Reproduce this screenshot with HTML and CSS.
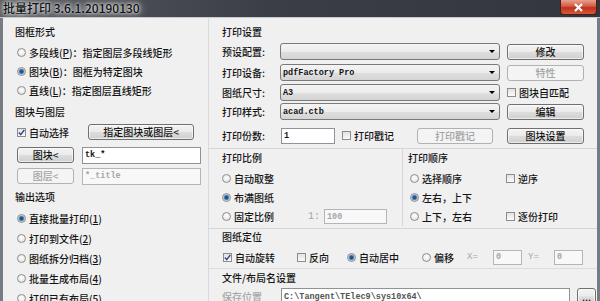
FILE: index.html
```html
<!DOCTYPE html>
<html lang="zh-CN">
<head>
    <meta charset="UTF-8">
    <title>批量打印</title>
    <link rel="stylesheet" href="styles.css">
</head>
<body>
<div class="window">

    <!-- Title bar -->
    <div class="titlebar">
        <span class="title">批量打印 3.6.1.20190130</span>
        <span class="close-btn">
            <svg width="11" height="9" viewBox="0 0 11 9"><path d="M2 1 L9 8 M9 1 L2 8" stroke="#fff" stroke-width="2.2" fill="none"/></svg>
        </span>
    </div>

    <div class="client">

        <!-- Left column -->
        <div class="col-left">
            <div class="group-title">图框形式</div>
            <div class="opt-list">
                <div class="opt"><span class="radio"></span>多段线(<u>P</u>)：指定图层多段线矩形</div>
                <div class="opt"><span class="radio checked"></span>图块(<u>B</u>)：图框为特定图块</div>
                <div class="opt"><span class="radio"></span>直线(<u>L</u>)：指定图层直线矩形</div>
            </div>

            <div class="group-title title-layer">图块与图层</div>
            <div class="row row-auto">
                <div class="opt chk-auto">
                    <span class="check"><svg width="7" height="7" viewBox="0 0 7 7"><path d="M0.8 3.6 L2.7 5.6 L6.3 1" fill="none" stroke="#34498a" stroke-width="1.4"/></svg></span>自动选择
                </div>
                <button class="btn btn-pick">指定图块或图层&lt;</button>
            </div>
            <div class="row row-block">
                <button class="btn btn-small">图块&lt;</button>
                <div class="field field-block">tk_*</div>
            </div>
            <div class="row row-layer">
                <button class="btn btn-small" disabled>图层&lt;</button>
                <div class="field field-block disabled">*_title</div>
            </div>

            <div class="group-title title-out">输出选项</div>
            <div class="opt-list out-list">
                <div class="opt"><span class="radio checked"></span>直接批量打印(<u>1</u>)</div>
                <div class="opt"><span class="radio"></span>打印到文件(<u>2</u>)</div>
                <div class="opt"><span class="radio"></span>图纸拆分归档(<u>3</u>)</div>
                <div class="opt"><span class="radio"></span>批量生成布局(<u>4</u>)</div>
                <div class="opt"><span class="radio"></span>打印已有布局(<u>5</u>)</div>
            </div>
        </div>

        <!-- Right column -->
        <div class="col-right">
            <div class="group-title">打印设置</div>
            <div class="row r1">
                <span class="lbl">预设配置:</span>
                <div class="combo"></div>
                <button class="btn btn-side">修改</button>
            </div>
            <div class="row r2">
                <span class="lbl">打印设备:</span>
                <div class="combo">pdfFactory Pro</div>
                <button class="btn btn-side" disabled>特性</button>
            </div>
            <div class="row r3">
                <span class="lbl">图纸尺寸:</span>
                <div class="combo">A3</div>
                <div class="opt chk-side"><span class="check"></span>图块自匹配</div>
            </div>
            <div class="row r4">
                <span class="lbl">打印样式:</span>
                <div class="combo">acad.ctb</div>
                <button class="btn btn-side">编辑</button>
            </div>
            <div class="row r5">
                <span class="lbl">打印份数:</span>
                <div class="field field-copies">1</div>
                <div class="opt chk-stamp"><span class="check"></span>打印戳记</div>
                <button class="btn btn-stamp" disabled>打印戳记</button>
                <button class="btn btn-side">图块设置</button>
            </div>

            <div class="split">
                <div class="box-scale">
                    <div class="group-title">打印比例</div>
                    <div class="opt-list">
                        <div class="opt"><span class="radio"></span>自动取整</div>
                        <div class="opt"><span class="radio checked"></span>布满图纸</div>
                        <div class="opt"><span class="radio"></span>固定比例<span class="ratio">1:</span><div class="field field-ratio disabled">100</div></div>
                    </div>
                </div>
                <div class="box-order">
                    <div class="group-title">打印顺序</div>
                    <div class="order-grid">
                        <div class="opt"><span class="radio"></span>选择顺序</div>
                        <div class="opt"><span class="check"></span>逆序</div>
                        <div class="opt"><span class="radio checked"></span>左右，上下</div>
                        <div></div>
                        <div class="opt"><span class="radio"></span>上下，左右</div>
                        <div class="opt"><span class="check"></span>逐份打印</div>
                    </div>
                </div>
            </div>

            <div class="group-title title-pos">图纸定位</div>
            <div class="row r-pos">
                <div class="opt w-rot">
                    <span class="check"><svg width="7" height="7" viewBox="0 0 7 7"><path d="M0.8 3.6 L2.7 5.6 L6.3 1" fill="none" stroke="#34498a" stroke-width="1.4"/></svg></span>自动旋转
                </div>
                <div class="opt w-rev"><span class="check"></span>反向</div>
                <div class="opt w-center"><span class="radio checked"></span>自动居中</div>
                <div class="opt w-off"><span class="radio"></span>偏移</div>
                <span class="xy">X=</span>
                <div class="field field-off disabled">0</div>
                <span class="xy xy-y">Y=</span>
                <div class="field field-off disabled">0</div>
            </div>

            <div class="group-title title-file">文件/布局名设置</div>
            <div class="row r-path">
                <span class="lbl disabled">保存位置</span>
                <div class="field field-path">C:\Tangent\TElec9\sys10x64\</div>
                <button class="btn btn-browse">...</button>
            </div>
        </div>
    </div>
</div>
</body>
</html>
```

FILE: styles.css
```css
* {
    box-sizing: border-box;
}

body {
    margin: 0;
    background-color: #f0f0f0;
    font-family: "Noto Sans CJK SC", "Noto Sans", sans-serif;
    font-size: 10px;
    font-weight: 500;
    color: #141414;
}

.window {
    width: 600px;
    height: 301px;
    display: flex;
    flex-direction: column;
    overflow: hidden;
}

/* Title bar */
.titlebar {
    height: 18px;
    flex: none;
    display: flex;
    justify-content: space-between;
    align-items: flex-start;
    padding-right: 3px;
    background: linear-gradient(to right, #575b61, #3b3f45 45%, #33373d);
    border-bottom: 1px solid #c6cacf;
}

.title {
    margin-left: 3px;
    font-size: 12px;
    line-height: 16px;
    font-weight: 500;
    color: #111;
    text-shadow: 0 0 3px #f2f2f2, 0 0 6px #e2e2e2, 0 0 10px #cfcfcf;
}

.close-btn {
    width: 37px;
    height: 15px;
    display: flex;
    align-items: center;
    justify-content: center;
    border: 1px solid #4a1d15;
    border-top: none;
    border-radius: 0 0 4px 4px;
    background: linear-gradient(#e8a08e, #d15a43 45%, #c0301b 55%, #d8593c);
}

/* Client area */
.client {
    flex: 1;
    display: flex;
    background-color: #f0f0f0;
    border-left: 3px solid #767c83;
    border-right: 3px solid #767c83;
}

.col-left {
    width: 206px;
    flex: none;
    padding: 7px 0 0 12px;
    border-right: 1px solid #dadada;
}

.col-right {
    flex: 1;
    padding: 7px 0 0 13px;
}

.group-title {
    height: 14px;
    line-height: 14px;
    white-space: nowrap;
}

.opt-list {
    margin-top: 4px;
}

.col-left .opt-list,
.col-left .row {
    margin-left: 2px;
}

.opt {
    display: flex;
    align-items: center;
    height: 19px;
    white-space: nowrap;
}

.out-list .opt {
    height: 20px;
}

.opt u {
    text-decoration-thickness: 1px;
}

/* Radio and check box */
.radio {
    width: 9px;
    height: 9px;
    flex: none;
    margin-right: 3px;
    border-radius: 50%;
    border: 1px solid #8c8c8c;
    background: radial-gradient(circle at 50% 40%, #ffffff, #dedede);
}

.radio.checked {
    background: radial-gradient(circle, #1d4b85 0, #2b5d98 1.6px, #7aa1cc 2.6px, #e9e9e9 3.4px);
}

.check {
    width: 9px;
    height: 9px;
    flex: none;
    margin-right: 3px;
    border: 1px solid #8c8c8c;
    background: linear-gradient(#e2e2e2, #fbfbfb);
    display: flex;
    align-items: center;
    justify-content: center;
}

.check svg {
    display: block;
}

/* Buttons */
.btn {
    flex: none;
    padding: 0;
    font-family: inherit;
    font-size: 10px;
    font-weight: 500;
    line-height: 14px;
    color: #141414;
    border: 1px solid #707070;
    border-radius: 3px;
    background: linear-gradient(#f3f3f3 0%, #ebebeb 48%, #dddddd 52%, #cfcfcf 100%);
    box-shadow: inset 0 0 0 1px rgba(255, 255, 255, 0.6);
}

.btn:disabled {
    color: #a3a3a3;
    border-color: #adb2b5;
    background: #f4f4f4;
    box-shadow: none;
}

/* Text fields */
.field {
    flex: none;
    display: flex;
    align-items: center;
    padding-left: 2px;
    background-color: #ffffff;
    border: 1px solid #8f9297;
    font-family: "Liberation Mono", monospace;
    font-size: 8.5px;
    font-weight: bold;
    white-space: nowrap;
    overflow: hidden;
}

.field.disabled {
    color: #a6a6a6;
    background-color: #f8f8f8;
    border-color: #b2b5b9;
}

/* Combo boxes */
.combo {
    position: relative;
    flex: none;
    width: 220px;
    height: 17px;
    display: flex;
    align-items: center;
    padding-left: 2px;
    border: 1px solid #7a7a7a;
    border-radius: 3px;
    background: linear-gradient(#f4f4f4, #ececec 50%, #dfdfdf 51%, #d4d4d4);
    font-family: "Liberation Mono", monospace;
    font-size: 8.5px;
    font-weight: bold;
}

.combo::after {
    content: "";
    position: absolute;
    right: 4px;
    top: 6px;
    border-left: 3px solid transparent;
    border-right: 3px solid transparent;
    border-top: 3px solid #000;
}

.row {
    display: flex;
    align-items: center;
}

.lbl {
    width: 58px;
    flex: none;
    white-space: nowrap;
}

.disabled {
    color: #a6a6a6;
}

/* Left column rows */
.title-layer {
    margin-top: 5px;
}

.row-auto {
    margin-top: 5px;
    height: 16px;
}

.chk-auto {
    width: 71px;
    height: 16px;
}

.btn-pick {
    width: 106px;
    height: 16px;
}

.row-block {
    margin-top: 7px;
    height: 16px;
}

.row-layer {
    margin-top: 5px;
    height: 16px;
}

.btn-small {
    width: 57px;
    height: 16px;
}

.field-block {
    margin-left: 8px;
    width: 119px;
    height: 17px;
}

.title-out {
    margin-top: 6px;
}

.out-list {
    margin-top: 4px;
}

/* Right column rows */
.r1 { margin-top: 4px; height: 17px; }
.r2 { margin-top: 4px; height: 17px; }
.r3 { margin-top: 3px; height: 17px; }
.r4 { margin-top: 2px; height: 17px; }
.r5 { margin-top: 7px; height: 17px; }

.btn-side {
    margin-left: 7px;
    width: 77px;
    height: 16px;
}

.chk-side {
    margin-left: 7px;
}

.field-copies {
    margin-left: 1px;
    width: 54px;
    height: 16px;
}

.chk-stamp {
    margin-left: 7px;
    width: 75px;
}

.btn-stamp {
    width: 76px;
    height: 16px;
}

.r5 .btn-side {
    margin-left: 14px;
}

/* Scale and order groups */
.split {
    display: flex;
    margin: 4px 0 0 -13px;
    padding: 0 0 2px 13px;
    border-top: 1px solid #d6d6d6;
    border-bottom: 1px solid #d6d6d6;
}

.box-scale {
    width: 180px;
    flex: none;
    padding-top: 2px;
}

.box-order {
    flex: 1;
    padding: 2px 0 0 5px;
    border-left: 1px solid #d6d6d6;
}

.ratio {
    margin-left: 34px;
    width: 16px;
    color: #a6a6a6;
    font-family: "Liberation Mono", monospace;
}

.field-ratio {
    width: 63px;
    height: 15px;
}

.order-grid {
    display: grid;
    grid-template-columns: 96px auto;
    margin: 4px 0 0 2px;
}

/* Placement row */
.title-pos {
    margin-top: 1px;
}

.r-pos {
    margin: 4px 0 0 1px;
    height: 18px;
}

.w-rot { width: 74px; }
.w-rev { width: 50px; }
.w-center { width: 75px; }
.w-off { width: 45px; }

.xy {
    width: 26px;
    flex: none;
    color: #a6a6a6;
    font-family: "Liberation Mono", monospace;
    font-size: 9px;
}

.xy-y {
    margin-left: 6px;
}

.field-off {
    width: 29px;
    height: 15px;
}

/* File settings */
.title-file {
    margin: 2px 0 0 -13px;
    padding: 2px 0 0 13px;
    height: auto;
    border-top: 1px solid #dcdcdc;
}

.r-path {
    margin-top: 3px;
    height: 17px;
}

.field-path {
    margin-left: 1px;
    width: 289px;
    height: 17px;
    color: #555;
}

.btn-browse {
    margin-left: 7px;
    width: 19px;
    height: 17px;
}
```
